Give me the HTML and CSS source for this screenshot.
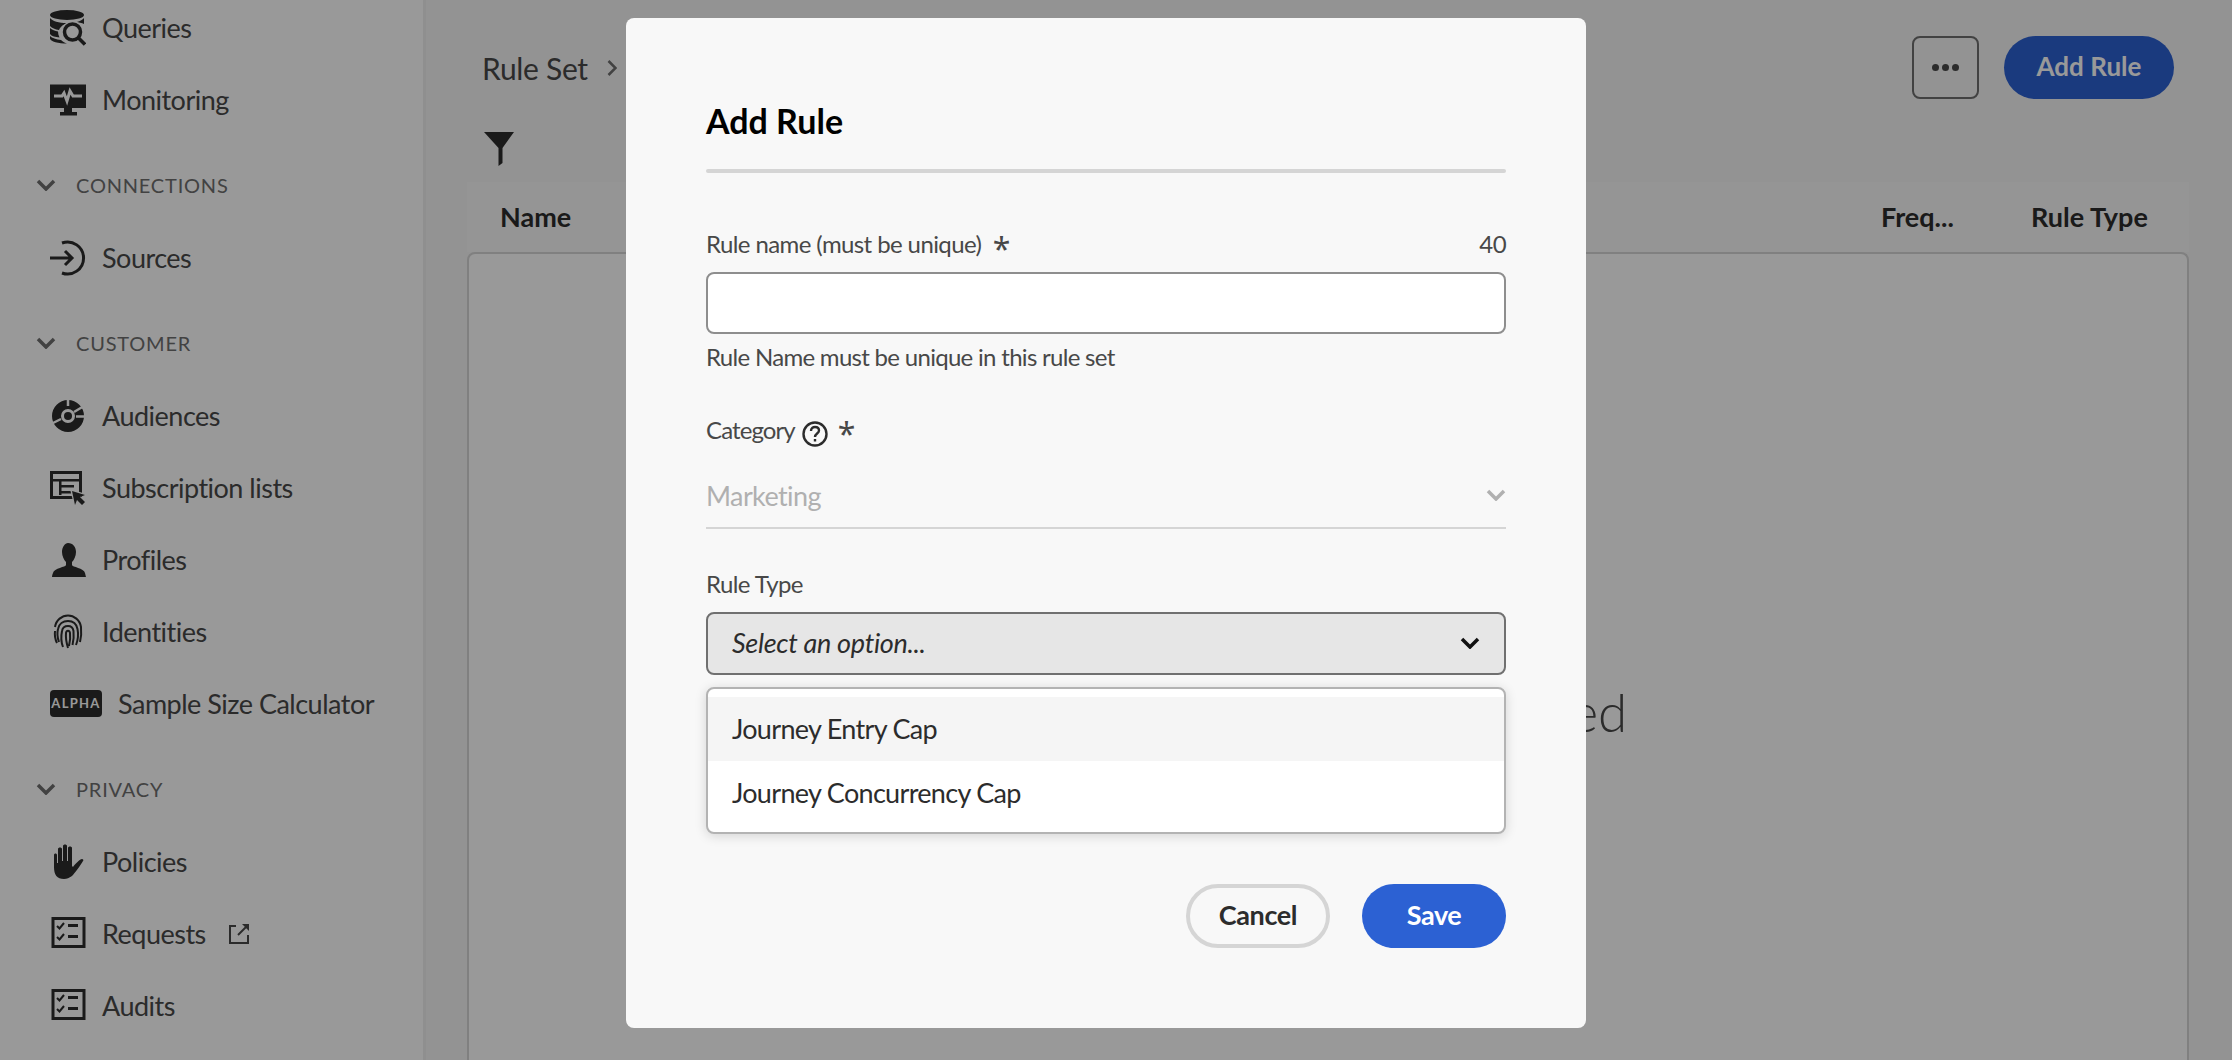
FILE: index.html
```html
<!DOCTYPE html>
<html lang="en">
<head>
    <meta charset="UTF-8">
    <title>Add Rule</title>
    <link rel="stylesheet" href="styles.css">
</head>
<body>
    <div class="app">
        <nav class="sidebar">
            <div class="nav-list">
                <a class="nav-item">
                    <svg class="nav-icon" viewBox="0 0 36 36"><ellipse cx="17" cy="5" rx="17" ry="5"/><path d="M0 8c2 3 9 5 17 5s15-2 17-5v6c-2-1-5-2-10-2-7 0-13 3-15 8-4-.5-7-2-9-4zM0 18c2 2 5 3 8 3.600 0 2 .5 4 1.500 6 -4-.5-8-1.500-9.500-3.600zM0 26c2 2 6 3.500 11 4 2 2 4 3 6 3.600-8 0-17-2-17-5z"/><circle class="cut" cx="22.500" cy="22" r="11"/><circle class="ring" cx="22.500" cy="22" r="8"/><path class="ring" d="M28.500 28l6.500 6.500"/></svg>
                    <span>Queries</span>
                </a>
                <a class="nav-item">
                    <svg class="nav-icon" viewBox="0 0 36 36"><path d="M0 2.500h36v23.500H0zM14 26h8v4h5v3.500H10V30h4z"/><path class="pulse" d="M4 14h8l2-3 3 8 3-10 3 5h9"/></svg>
                    <span>Monitoring</span>
                </a>

                <div class="nav-section"><svg class="section-chevron" viewBox="0 0 20 12"><path d="M2 2l8 8 8-8"/></svg><span>CONNECTIONS</span></div>
                <a class="nav-item">
                    <svg class="nav-icon" viewBox="0 0 36 36"><path class="line" d="M12 3a16 16 0 1 1 0 30"/><path class="line" d="M0 18h21M15 11l7 7-7 7"/></svg>
                    <span>Sources</span>
                </a>

                <div class="nav-section"><svg class="section-chevron" viewBox="0 0 20 12"><path d="M2 2l8 8 8-8"/></svg><span>CUSTOMER</span></div>
                <a class="nav-item">
                    <svg class="nav-icon" viewBox="0 0 36 36"><circle class="donut" cx="18" cy="18" r="11.500"/><circle cx="18" cy="18" r="4"/><path class="cut-line" d="M18 0v8M24 14l10-6M26 18.500h10M11 21L1 26"/></svg>
                    <span>Audiences</span>
                </a>
                <a class="nav-item">
                    <svg class="nav-icon" viewBox="0 0 36 36"><path class="line" d="M1.500 2.500h29v25h-29z"/><path d="M1 9h30v2.500H1zM9 15h15v2.500H9zM9 21h12v2.500H9zM9 11h2.500v14H9z"/><path class="cut" d="M20 19l16 5-5 2 5 6-4 4-6-6-2 5z"/><path d="M22 21l13 4-5 2 5 5-3 3-5-5-2 5z"/></svg>
                    <span>Subscription lists</span>
                </a>
                <a class="nav-item">
                    <svg class="nav-icon" viewBox="0 0 36 36"><path d="M18 1c5 0 8 4 8 9 0 4-2 8-4 10v3c0 2 12 3 13 8 .5 2 1 4 1 4H2s0-2 1-4c1-5 13-6 13-8v-3c-2-2-4-6-4-10 0-5 3-9 6-9z"/></svg>
                    <span>Profiles</span>
                </a>
                <a class="nav-item">
                    <svg class="nav-icon" viewBox="0 0 36 36"><g class="finger"><path d="M5 13C6 6 12 1.500 18 1.500s12 4.500 13 11.500c.5 5 .5 9-1 15"/><path d="M5 17c-.5 4 0 8 2 12"/><path d="M9 28c-1.500-4-2-9-1-13 1-5 5-8 10-8s8.500 3 9.500 8c1 5 .5 11-1.500 16"/><path d="M13 33c-2-5-2-11-1-16 .5-3 3-5 6-5s5 2 5.500 5c.5 5 0 10-1 14"/><path d="M18 34c-1.500-5-2.500-10-2-15 .5-3 3.500-3 4 0 .5 4 0 9-1 13"/></g></svg>
                    <span>Identities</span>
                </a>
                <a class="nav-item">
                    <span class="alpha-badge">ALPHA</span>
                    <span>Sample Size Calculator</span>
                </a>

                <div class="nav-section"><svg class="section-chevron" viewBox="0 0 20 12"><path d="M2 2l8 8 8-8"/></svg><span>PRIVACY</span></div>
                <a class="nav-item">
                    <svg class="nav-icon" viewBox="0 0 36 36"><path d="M4 11c0-2 3-2 3 0v8h1V5c0-2 4-2 4 0v12h1V2c0-2 4-2 4 0v15h1V4c0-2 4-2 4 0v18l1 1c2-3 7-8 9-8 1 0 2 1 1 2-3 5-8 12-11 15-3 2-5 3-8 3-7 0-10-4-10-12z"/></svg>
                    <span>Policies</span>
                </a>
                <a class="nav-item">
                    <svg class="nav-icon" viewBox="0 0 36 36"><path class="line" d="M3 2.500h31v28H3z"/><path class="tick" d="M7 10l2.500 2.500L14 7M7 21l2.500 2.500L14 18"/><path d="M18 8h10v3H18zM18 19h10v3H18z"/></svg>
                    <span>Requests</span>
                    <svg class="external-icon" viewBox="0 0 22 22"><path class="thin" d="M8 3H2v17h18v-8"/><path class="thin" d="M10 12L20 2"/><path d="M14 1h7v7z"/></svg>
                </a>
                <a class="nav-item">
                    <svg class="nav-icon" viewBox="0 0 36 36"><path class="line" d="M3 2.500h31v28H3z"/><path class="tick" d="M7 10l2.500 2.500L14 7M7 21l2.500 2.500L14 18"/><path d="M18 8h10v3H18zM18 19h10v3H18z"/></svg>
                    <span>Audits</span>
                </a>
            </div>
        </nav>

        <main class="main">
            <div class="page-head">
                <div class="breadcrumb">
                    <span>Rule Set</span>
                    <svg class="crumb-chevron" viewBox="0 0 10 18"><path d="M1.500 2l7 7-7 7"/></svg>
                </div>
                <div class="head-actions">
                    <button class="more-btn"><span></span><span></span><span></span></button>
                    <button class="add-btn">Add Rule</button>
                </div>
            </div>
            <svg class="filter-icon" viewBox="0 0 30 34"><path d="M0 0h30L18.500 16v15l-4 3V16z"/></svg>
            <div class="table-head">
                <span class="col-name">Name</span>
                <span class="col-freq">Freq...</span>
                <span class="col-type">Rule Type</span>
            </div>
            <div class="table-body">
                <div class="empty-text">No rules have been added</div>
            </div>
        </main>
    </div>

    <div class="overlay"></div>

    <div class="modal">
        <h2 class="modal-title">Add Rule</h2>
        <div class="divider"></div>

        <div class="label-row first-row">
            <label>Rule name (must be unique) <span class="req">*</span></label>
            <span>40</span>
        </div>
        <input class="text-input" type="text">
        <div class="helper">Rule Name must be unique in this rule set</div>

        <div class="label-row category-row">
            <label class="with-icon">Category
                <svg class="help-icon" viewBox="0 0 26 26"><circle cx="13" cy="13" r="11.500"/><path d="M9 10c0-3 2-4 4-4 3 0 4 2 4 3.500 0 3-4 3-4 6.500"/><path class="dot" d="M13 18v2.500"/></svg>
                <span class="req">*</span>
            </label>
        </div>
        <div class="quiet-select">
            <span>Marketing</span>
            <svg class="select-chevron" viewBox="0 0 20 12"><path d="M2 2l8 8 8-8"/></svg>
        </div>

        <div class="label-row type-row">
            <label>Rule Type</label>
        </div>
        <div class="select-wrap">
            <div class="select-box">
                <span>Select an option...</span>
                <svg class="select-chevron dark" viewBox="0 0 20 12"><path d="M2 2l8 8 8-8"/></svg>
            </div>
            <ul class="popover">
                <li class="active">Journey Entry Cap</li>
                <li>Journey Concurrency Cap</li>
            </ul>
        </div>

        <div class="modal-foot">
            <button class="btn-cancel">Cancel</button>
            <button class="btn-save">Save</button>
        </div>
    </div>
</body>
</html>
```

FILE: styles.css
```css
* {
    box-sizing: border-box;
}
body {
    margin: 0;
    height: 1060px;
    overflow: hidden;
    font-family: Lato, "Noto Sans", sans-serif;
    font-size: 27px;
    color: #2c2c2c;
    background: #f5f5f5;
}
.app {
    display: flex;
    height: 1060px;
}

/* left nav */
.sidebar {
    width: 426px;
    flex: none;
    background: #fff;
    border-right: 3px solid #efefef;
    overflow: hidden;
}
.nav-list {
    margin-top: -8px;
}
.nav-item {
    display: flex;
    align-items: center;
    height: 72px;
    padding: 0 0 1px 50px;
    letter-spacing: -0.5px;
    color: #484848;
}
.nav-icon {
    width: 36px;
    height: 36px;
    margin-right: 16px;
    flex: none;
    fill: #2c2c2c;
}
.nav-icon .cut {
    fill: #fff;
}
.nav-icon .ring {
    fill: none;
    stroke: #2c2c2c;
    stroke-width: 3.5;
}
.nav-icon .pulse {
    fill: none;
    stroke: #fff;
    stroke-width: 3;
}
.line {
    fill: none;
    stroke: #2c2c2c;
    stroke-width: 3;
}
.thin {
    fill: none;
    stroke: #484848;
    stroke-width: 2;
}
.tick {
    fill: none;
    stroke: #2c2c2c;
    stroke-width: 2;
}
.donut {
    fill: none;
    stroke: #2c2c2c;
    stroke-width: 9;
}
.cut-line {
    fill: none;
    stroke: #fff;
    stroke-width: 2.5;
}
.finger path {
    fill: none;
    stroke: #2c2c2c;
    stroke-width: 2;
}
.nav-section {
    display: flex;
    align-items: center;
    height: 72px;
    margin-top: 14px;
    padding: 0 0 2px 36px;
    font-size: 20px;
    letter-spacing: 0.8px;
    color: #6e6e6e;
}
.section-chevron {
    width: 20px;
    height: 12px;
    margin-right: 20px;
    fill: none;
    stroke: #6e6e6e;
    stroke-width: 3.5;
}
.alpha-badge {
    width: 52px;
    height: 27px;
    margin-right: 16px;
    flex: none;
    border-radius: 4px;
    background: #2c2c2c;
    color: #fff;
    font-size: 13px;
    font-weight: 700;
    letter-spacing: 1.3px;
    line-height: 27px;
    text-align: center;
}
.external-icon {
    width: 22px;
    height: 22px;
    margin-left: 22px;
    fill: #484848;
}

/* page behind the dialog */
.main {
    flex: 1;
    display: flex;
    flex-direction: column;
}
.page-head {
    display: flex;
    justify-content: space-between;
    margin-top: 36px;
    padding: 0 58px 0 56px;
}
.breadcrumb {
    display: flex;
    align-items: center;
    gap: 19px;
    font-size: 30px;
    letter-spacing: -0.3px;
    color: #484848;
}
.crumb-chevron {
    width: 10px;
    height: 18px;
    fill: none;
    stroke: #6e6e6e;
    stroke-width: 2.5;
}
.head-actions {
    display: flex;
    gap: 25px;
}
.more-btn {
    display: flex;
    align-items: center;
    justify-content: center;
    gap: 3px;
    width: 67px;
    height: 63px;
    padding: 0;
    background: none;
    border: 2px solid #6e6e6e;
    border-radius: 8px;
}
.more-btn span {
    width: 7px;
    height: 7px;
    border-radius: 50%;
    background: #484848;
}
.add-btn {
    width: 170px;
    height: 63px;
    padding: 0 0 3px;
    border: 0;
    border-radius: 32px;
    background: #2c61d3;
    color: #fff;
    font-family: inherit;
    font-size: 26px;
    font-weight: 700;
}
.filter-icon {
    display: block;
    flex: none;
    width: 30px;
    height: 34px;
    margin: 33px 0 0 58px;
    fill: #2c2c2c;
}
.table-head {
    display: flex;
    flex: none;
    height: 70px;
    margin: 16px 43px 0 41px;
    padding: 0 42px 2px 33px;
    align-items: center;
    background: #f8f8f8;
    font-weight: 700;
    font-size: 27px;
    color: #2c2c2c;
}
.col-name {
    flex: 1;
}
.col-freq {
    width: 150px;
}
.col-type {
    width: 116px;
    white-space: nowrap;
}
.table-body {
    display: flex;
    flex: 1;
    justify-content: center;
    margin: 0 43px 0 41px;
    padding-top: 423px;
    background: #fff;
    border: 2px solid #d5d5d5;
    border-bottom: 0;
    border-radius: 8px 8px 0 0;
}
.empty-text {
    font-size: 53px;
    font-weight: 300;
    line-height: 70px;
    color: #484848;
}

.overlay {
    position: fixed;
    inset: 0;
    background: rgba(0, 0, 0, 0.4);
}

/* dialog */
.modal {
    position: absolute;
    top: 18px;
    left: 626px;
    width: 960px;
    height: 1010px;
    padding: 80px 80px 0;
    background: #f8f8f8;
    border-radius: 8px;
    font-size: 24px;
    letter-spacing: -0.6px;
    color: #484848;
}
.modal-title {
    margin: 0 0 25px;
    font-size: 34px;
    line-height: 46px;
    font-weight: 700;
    letter-spacing: 0;
    color: #000;
}
.divider {
    height: 4px;
    border-radius: 2px;
    background: #d5d5d5;
}
.label-row {
    display: flex;
    justify-content: space-between;
    line-height: 36px;
}
.first-row {
    margin-top: 53px;
}
.category-row {
    margin-top: 37px;
}
.type-row {
    margin-top: 37px;
}
.with-icon {
    display: flex;
    align-items: center;
    gap: 7px;
    letter-spacing: -0.9px;
}
.req {
    margin-left: 6px;
    font-family: "Noto Sans", sans-serif;
    font-size: 32px;
    line-height: 0;
    vertical-align: -8px;
}
.with-icon .req {
    margin-left: 3px;
    padding-top: 8px;
}
.help-icon {
    width: 26px;
    height: 26px;
    margin-top: 7px;
    fill: none;
    stroke: #2c2c2c;
    stroke-width: 2.4;
}
.text-input {
    display: block;
    width: 100%;
    height: 62px;
    margin-top: 10px;
    background: #fff;
    border: 2px solid #8e8e8e;
    border-radius: 8px;
}
.helper {
    margin-top: 5px;
    line-height: 36px;
    letter-spacing: -0.7px;
    color: #484848;
}
.quiet-select {
    display: flex;
    align-items: center;
    justify-content: space-between;
    height: 63px;
    margin-top: 18px;
    padding-bottom: 3px;
    border-bottom: 2px solid #d5d5d5;
    font-size: 27px;
    color: #b0b0b0;
}
.select-chevron {
    width: 20px;
    height: 12px;
    fill: none;
    stroke: #b0b0b0;
    stroke-width: 3.5;
}
.select-chevron.dark {
    stroke: #111;
}
.select-wrap {
    position: relative;
    margin-top: 10px;
}
.select-box {
    display: flex;
    align-items: center;
    justify-content: space-between;
    height: 63px;
    padding: 0 24px 2px;
    background: #e6e6e6;
    border: 2px solid #707070;
    border-radius: 8px;
    font-size: 27px;
    font-style: italic;
    letter-spacing: -0.3px;
    color: #2c2c2c;
}
.popover {
    position: absolute;
    top: 75px;
    left: 0;
    right: 0;
    height: 147px;
    margin: 0;
    padding: 8px 0;
    list-style: none;
    background: #fff;
    border: 2px solid #b3b3b3;
    border-radius: 8px;
    box-shadow: 0 2px 12px rgba(0, 0, 0, 0.15);
    font-size: 27px;
    letter-spacing: -0.68px;
    color: #2c2c2c;
}
.popover li {
    display: flex;
    align-items: center;
    height: 64px;
    padding: 0 0 2px 24px;
}
.popover li.active {
    background: #f5f5f5;
}
.modal-foot {
    display: flex;
    justify-content: flex-end;
    gap: 32px;
    margin-top: 209px;
}
.btn-cancel,
.btn-save {
    height: 64px;
    width: 144px;
    padding: 0 0 3px;
    border-radius: 32px;
    font-family: inherit;
    font-size: 27px;
    font-weight: 700;
    letter-spacing: -0.4px;
}
.btn-cancel {
    background: none;
    border: 4px solid #d5d5d5;
    color: #2c2c2c;
}
.btn-save {
    background: #2c61d3;
    border: 0;
    color: #fff;
}
```
